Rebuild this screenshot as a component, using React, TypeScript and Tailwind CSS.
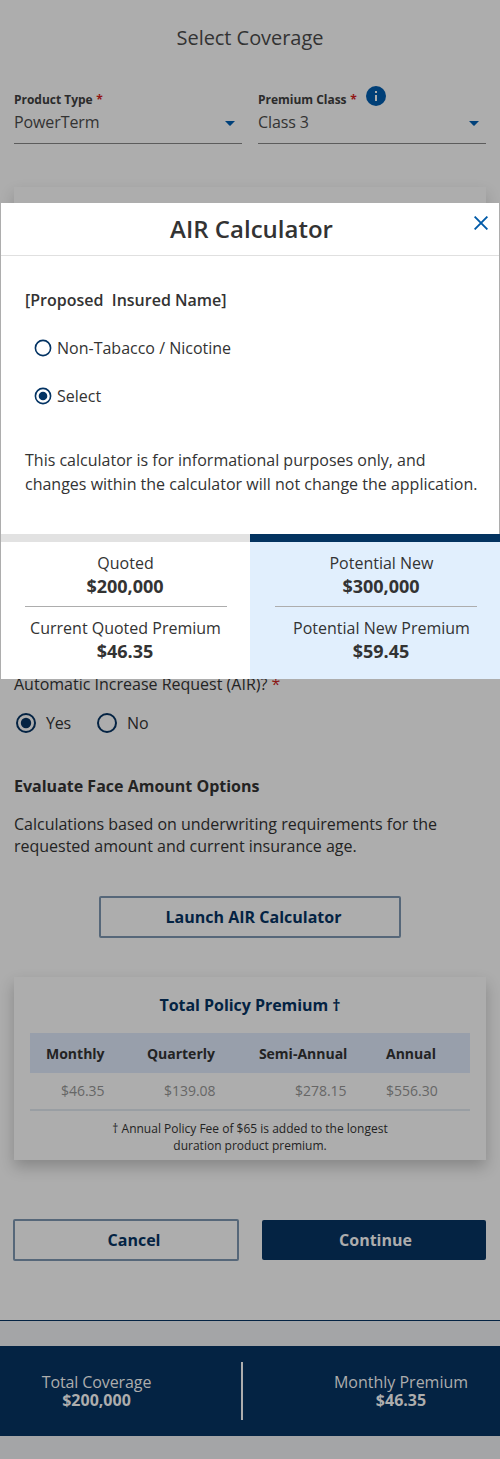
import React from "react";

function Radio({ checked, size, ring, dot }: { checked?: boolean; size: number; ring: string; dot: number }) {
  return (
    <svg width={size} height={size} viewBox={`0 0 ${size} ${size}`} className="block shrink-0">
      <circle cx={size / 2} cy={size / 2} r={size > 18 ? 9 : 7.6} fill="none" stroke={ring} strokeWidth={size > 18 ? 2 : 1.6} />
      {checked && <circle cx={size / 2} cy={size / 2} r={dot} fill={ring} />}
    </svg>
  );
}

function SelectField({ label, value, info }: { label: string; value: string; info?: boolean }) {
  return (
    <div className="h-[58px] w-[228px] border-b border-[#5c5c5c]">
      <div className="flex h-[23px] items-start">
        <span className="pt-[6px] text-[12px] leading-4 font-bold tracking-[-0.02px] text-[#2b2b2b]">
          {label} <span className="ml-[0.6px] text-[#921616]">*</span>
        </span>
        {info && (
          <svg width="20" height="20" viewBox="0 0 20 20" className="ml-auto mr-[100px] block">
            <circle cx="10" cy="10" r="10" fill="#003f77" />
            <path d="M9 5h2v2H9zM9 9h2v6H9z" fill="#adadad" />
          </svg>
        )}
      </div>
      <div className="mt-[2px] flex h-[22px] items-center justify-between pr-[7px] text-[16px] leading-[22px] text-[#333]">
        <span className="tracking-[-0.1px]">{value}</span>
        <svg width="10" height="5" viewBox="0 0 10 5" className="mt-[2px] block">
          <path d="M0 0h10L5.6 4.6a.9.9 0 0 1-1.2 0z" fill="#00417a" />
        </svg>
      </div>
    </div>
  );
}

function Amounts({ title, amount, label, premium, className }: {
  title: string; amount: string; label: string; premium: string; className: string;
}) {
  return (
    <div className={className}>
      <div className="pt-[10px] text-[16px] leading-[22px]">{title}</div>
      <div className="pr-px text-[18px] leading-[25px] font-bold">{amount}</div>
      <div className="mt-[7px] h-px w-[202px] self-start bg-[#adadad]" />
      <div className="pt-[10px] text-[16px] leading-[23px]">{label}</div>
      <div className="-mt-px pr-px text-[18px] leading-[25px] font-bold">{premium}</div>
    </div>
  );
}

function CalculatorModal() {
  return (
    <div role="dialog" className="absolute top-[203px] left-0 flex h-[476px] w-[500px] flex-col bg-white text-[#333]">
      <div className="flex h-[331px] flex-col border-x border-[#adadad]">
        <div className="relative flex h-[53px] items-center justify-center border-b border-[#e0e0e0]">
          <h2 className="pl-[3px] text-[24px] leading-8 font-semibold">AIR Calculator</h2>
          <svg width="14" height="14" viewBox="0 0 14 14" className="absolute top-[13px] right-[11px]">
            <path d="M.6.6l12.8 12.8M13.4.6L.6 13.4" stroke="#005aa8" strokeWidth="1.9" />
          </svg>
        </div>
        <div className="px-6 pt-[33px]">
          <h3 className="text-[16px] leading-[22px] font-semibold whitespace-pre">{"[Proposed  Insured Name]"}</h3>
          <div className="mt-[26px] flex h-[22px] items-center gap-[5px] pl-[9px] text-[16px]">
            <Radio size={18} ring="#033363" dot={4.3} />
            Non-Tabacco / Nicotine
          </div>
          <div className="mt-[26px] flex h-[22px] items-center gap-[5px] pl-[9px] text-[16px]">
            <Radio size={18} ring="#033363" dot={4.3} checked />
            Select
          </div>
          <p className="mt-[41px] text-[16px] leading-6 whitespace-nowrap">
            This calculator is for informational purposes only, and
            <br />
            changes within the calculator will not change the application.
          </p>
        </div>
      </div>
      <div className="flex h-[145px]">
        <div className="w-[250px] border-l border-[#adadad]">
          <div className="h-2 bg-[#e2e2e2]" />
          <Amounts title="Quoted" amount="$200,000" label="Current Quoted Premium" premium="$46.35"
            className="flex h-[137px] flex-col items-center px-6" />
        </div>
        <div className="w-[250px] bg-[#e1effd]">
          <div className="h-2 bg-[#033360]" />
          <Amounts title="Potential New" amount="$300,000" label="Potential New Premium" premium="$59.45"
            className="flex h-[137px] flex-col items-center pr-[12px] pl-[25px]" />
        </div>
      </div>
    </div>
  );
}

export default function App() {
  return (
    <div className="relative h-[1459px] w-[500px] overflow-hidden bg-[#adadad] font-['Open_Sans',sans-serif] text-[#232323]">
      <h1 className="pt-6 text-center text-[20px] leading-7 tracking-[-0.05px] text-[#333]">Select Coverage</h1>
      <div className="mt-[34px] flex gap-4 px-[14px]">
        <SelectField label="Product Type" value="PowerTerm" />
        <SelectField label="Premium Class" value="Class 3" info />
      </div>
      <div className="mx-[14px] mt-[43px] h-[463px] bg-[#adadad] shadow-[0_7px_14px_rgba(0,0,0,0.18)]" />

      <div className="px-[14px] pt-[23px]">
        <div className="text-[16px] leading-[22px]">
          Automatic Increase Request (AIR)? <span className="text-[#8b1515]">*</span>
        </div>
        <div className="mt-[17px] flex h-[22px] items-center pl-[2px] text-[16px]">
          <Radio size={20} ring="#042343" dot={5.2} checked />
          <span className="w-[51px] pl-[10px] tracking-[-0.2px]">Yes</span>
          <span className="pl-[10px]"><Radio size={20} ring="#042343" dot={5.2} /></span>
          <span className="pl-[10px]">No</span>
        </div>
        <h3 className="mt-[41px] text-[16px] leading-[22px] font-bold">Evaluate Face Amount Options</h3>
        <p className="mt-4 text-[16px] leading-[22px] tracking-[-0.01px]">
          Calculations based on underwriting requirements for the
          <br />
          requested amount and current insurance age.
        </p>
        <button className="mx-auto mt-[39px] block h-[42px] w-[302px] rounded-[2px] border-2 border-[#566779] pl-[7px] text-[16px] font-bold text-[#042343]">
          Launch AIR Calculator
        </button>
      </div>

      <section className="mx-[14px] mt-[39px] h-[183px] bg-[#adadad] px-4 pt-[17px] shadow-[0_7px_14px_rgba(0,0,0,0.22)]">
        <h3 className="text-center text-[16px] leading-[22px] font-bold tracking-[-0.04px] text-[#042343]">Total Policy Premium †</h3>
        <div className="mt-[17px] flex h-10 items-center bg-[#989fab] text-[14px] font-bold">
          <span className="w-[74.6px] text-right">Monthly</span>
          <span className="w-[110.4px] text-right">Quarterly</span>
          <span className="w-[132.4px] text-right">Semi-Annual</span>
          <span className="pl-[38.6px]">Annual</span>
        </div>
        <div className="flex h-[38px] items-center border-b-2 border-[#999ea3] pb-px text-[14px] text-[#666]">
          <span className="w-[74.6px] text-right">$46.35</span>
          <span className="w-[111px] text-right">$139.08</span>
          <span className="w-[131px] text-right">$278.15</span>
          <span className="pl-[39.4px]">$556.30</span>
        </div>
        <p className="mt-[9px] text-center text-[12px] leading-[17px]">
          † Annual Policy Fee of $65 is added to the longest
          <br />
          duration product premium.
        </p>
      </section>

      <div className="mt-[59px] flex items-center gap-[23px] pl-[13px]">
        <button className="h-[42px] w-[226px] rounded-[2px] border-2 border-[#566779] pl-[16px] text-[16px] font-bold text-[#042343]">Cancel</button>
        <button className="h-10 w-[224px] rounded-[2px] bg-[#042343] pl-[3px] text-[16px] font-bold text-[#adadad]">Continue</button>
      </div>

      <footer className="mt-[59px] h-[139px] border-t border-[#042343] bg-[#a4a5a7] pt-[25px]">
        <div className="flex h-[90px] items-center bg-[#042343] text-center text-[16px] leading-[18px] text-[#adadad]">
          <div className="w-[193px]">
            <div className="font-normal tracking-[-0.1px]">Total Coverage</div>
            <div className="font-bold">$200,000</div>
          </div>
          <div className="ml-[48px] h-[58px] w-[2px] bg-[#adadad]" />
          <div className="ml-[59px] w-[198px]">
            <div className="font-normal">Monthly Premium</div>
            <div className="font-bold">$46.35</div>
          </div>
        </div>
      </footer>

      <CalculatorModal />
    </div>
  );
}
